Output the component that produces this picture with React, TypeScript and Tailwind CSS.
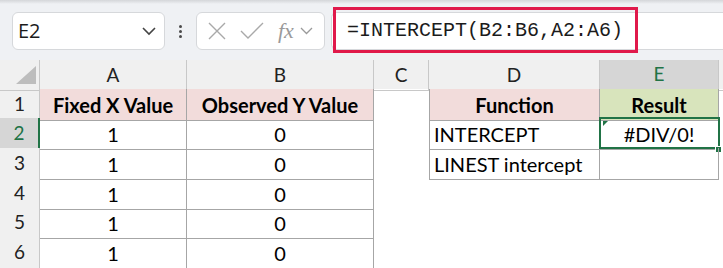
import React from "react";

const cellFont = { fontFamily: "Lato, 'Open Sans', sans-serif" };

function RowHeader({ n, active }: { n: number; active?: boolean }) {
  return (
    <div
      className={
        "flex items-center justify-center border-b border-[#c8c8c8] text-[19px] " +
        (active
          ? "bg-[#d6d6d6] text-[#217346] border-r-2 border-r-[#217346]"
          : "bg-[#f0f0f0] text-[#222] border-r border-r-[#c8c8c8]")
      }
    >
      {n}
    </div>
  );
}

type CellProps = {
  children?: React.ReactNode;
  cls?: string;
};
function Cell({ children, cls = "" }: CellProps) {
  return <div className={"flex items-center pt-[1px] text-[20px] text-black " + cls}>{children}</div>;
}

export default function App() {
  const cols = "grid grid-cols-[40px_147px_187px_55px_171px_119px_1fr]";
  const tb = "border-b border-r border-[#a6a6a6]";
  const data = [
    { n: 2, d: "INTERCEPT", e: "#DIV/0!" },
    { n: 3, d: "LINEST intercept", e: "" },
    { n: 4 },
    { n: 5 },
    { n: 6 },
  ];
  const heights = ["h-[30px]", "h-[30px]", "h-[29px]", "h-[30px]", "h-[29px]"];
  return (
    <div className="w-[723px] h-[268px] overflow-hidden bg-white relative" style={cellFont}>
      {/* Toolbar */}
      <div className="h-[60px] bg-[#eff1f4] relative">
        <div className="h-[4px] bg-gradient-to-b from-[#d4d6d9] to-[#eff1f4]" />
        <div className="flex items-start pt-[8px]">
          {/* Name box */}
          <div className="ml-[12px] w-[153px] h-[38px] bg-white border border-[#d6d8db] rounded-[6px] flex items-center pl-[5px] pr-[7px] justify-between">
            <span className="text-[20px] text-[#1b1b1b]" style={{ fontFamily: "'Open Sans', 'Noto Sans', sans-serif" }}>
              E2
            </span>
            <svg width="16" height="10" viewBox="0 0 16 10">
              <path d="M2 2 L8 8 L14 2" fill="none" stroke="#444" strokeWidth="1.6" />
            </svg>
          </div>
          {/* dots */}
          <div className="w-[31px] h-[38px] flex flex-col items-center justify-center gap-[2px]">
            <div className="w-[3px] h-[3px] rounded-full bg-[#4a4a4a]" />
            <div className="w-[3px] h-[3px] rounded-full bg-[#4a4a4a]" />
            <div className="w-[3px] h-[3px] rounded-full bg-[#4a4a4a]" />
          </div>
          {/* fx box */}
          <div className="w-[129px] h-[38px] bg-white border border-[#d6d8db] rounded-[6px] flex items-center pl-[10px]">
            <svg width="20" height="20" viewBox="0 0 20 20">
              <path d="M2 2 L18 18 M18 2 L2 18" stroke="#a9a9a9" strokeWidth="1.4" fill="none" />
            </svg>
            <svg width="26" height="20" viewBox="0 0 26 20" className="ml-[12px]">
              <path d="M2 10 L9 17 L24 2" stroke="#a9a9a9" strokeWidth="1.4" fill="none" />
            </svg>
            <span
              className="ml-[13px] text-[22px] italic text-[#9a9a9a] leading-none"
              style={{ fontFamily: "'Liberation Serif', 'DejaVu Serif', serif" }}
            >
              fx
            </span>
            <svg width="13" height="8" viewBox="0 0 13 8" className="ml-[6px]">
              <path d="M1 1 L6.5 6.5 L12 1" stroke="#9a9a9a" strokeWidth="1.3" fill="none" />
            </svg>
          </div>
          {/* formula input */}
          <div className="ml-[6px] flex-1 h-[38px] bg-white border border-r-0 border-[#d6d8db] rounded-l-[6px] flex items-center pl-[15px]">
            <span
              className="text-[20px] text-[#1b1b1b] whitespace-pre"
              style={{ fontFamily: "'Liberation Mono', 'DejaVu Sans Mono', monospace" }}
            >
              =INTERCEPT(B2:B6,A2:A6)
            </span>
          </div>
        </div>
        {/* red highlight box */}
        <div className="absolute left-[333px] top-[7px] w-[305px] h-[46px] border-[3px] border-[#e0194b]" />
      </div>

      {/* Column headers */}
      <div className={cols + " h-[29px] bg-[#f0f0f0] text-[19px] text-[#222]"}>
        <div className="border-r border-b border-[#c8c8c8] relative">
          <svg width="20" height="18" viewBox="0 0 20 18" className="absolute left-[16px] top-[6px]">
            <path d="M20 0 L20 18 L0 18 Z" fill="#bdbdbd" />
          </svg>
        </div>
        {["A", "B", "C", "D"].map((c) => (
          <div key={c} className="border-r border-b border-[#c8c8c8] flex items-center justify-center">
            {c}
          </div>
        ))}
        <div className="border-r border-[#c8c8c8] border-b-2 border-b-[#217346] bg-[#d6d6d6] text-[#217346] flex items-center justify-center">
          E
        </div>
        <div className="border-b border-[#c8c8c8]" />
      </div>

      {/* Row 1 */}
      <div className={cols + " h-[29px]"}>
        <RowHeader n={1} />
        <Cell cls={"bg-[#f2dcdb] justify-center font-bold " + tb}>Fixed X Value</Cell>
        <Cell cls={"bg-[#f2dcdb] justify-center font-bold " + tb}>Observed Y Value</Cell>
        <Cell cls="" />
        <Cell cls={"bg-[#f2dcdb] justify-center font-bold border-l border-[#a6a6a6] " + tb}>Function</Cell>
        <Cell cls={"bg-[#d8e4bc] justify-center font-bold " + tb}>Result</Cell>
        <Cell />
      </div>

      {data.map((r, i) => (
        <div key={r.n} className={cols + " " + heights[i]}>
          <RowHeader n={r.n} active={r.n === 2} />
          <Cell cls={"justify-center " + tb}>1</Cell>
          <Cell cls={"justify-center " + tb}>0</Cell>
          <Cell />
          {r.d !== undefined ? (
            <Cell cls={"pl-[4px] border-l border-[#a6a6a6] " + tb}>{r.d}</Cell>
          ) : (
            <Cell />
          )}
          {r.e !== undefined ? (
            <Cell cls={"justify-center relative " + tb}>
              {r.e}
              {r.n === 2 && (
                <>
                  <div className="absolute -left-[1px] -top-[1px] w-[121px] h-[32px] border-2 border-[#217346]" />
                  <svg width="5" height="5" viewBox="0 0 5 5" className="absolute left-[3px] top-[3px]">
                    <path d="M0 0 L5 0 L0 5 Z" fill="#217346" />
                  </svg>
                  <div className="absolute right-[-4px] bottom-[-4px] w-[7px] h-[7px] bg-[#217346] border border-white" />
                </>
              )}
            </Cell>
          ) : (
            <Cell />
          )}
          <Cell />
        </div>
      ))}
    </div>
  );
}
